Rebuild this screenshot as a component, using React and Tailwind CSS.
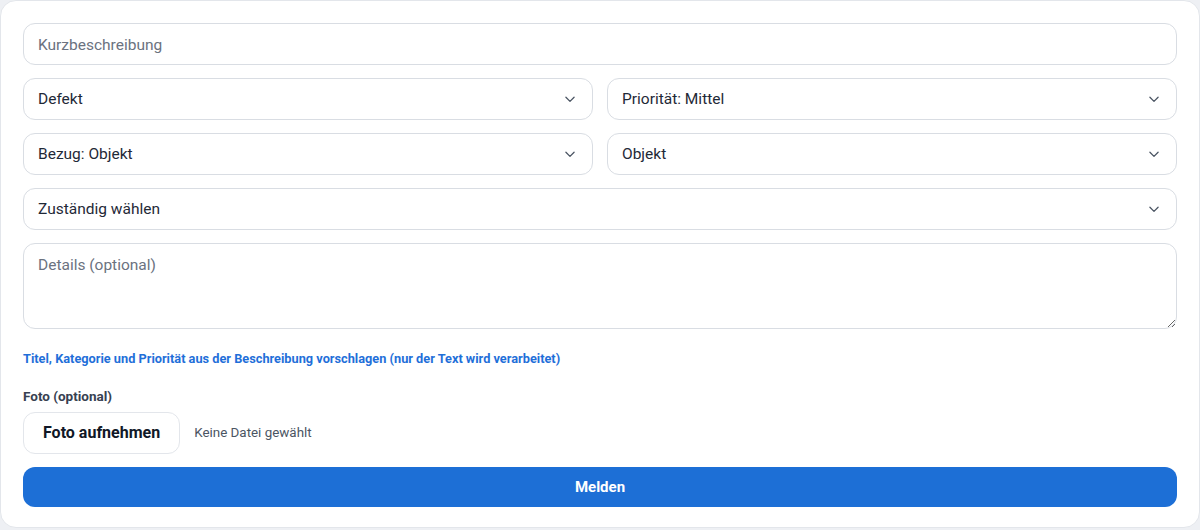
import React from "react";

function Chevron() {
  return (
    <svg
      width="14"
      height="14"
      viewBox="0 0 24 24"
      fill="none"
      stroke="#4b5563"
      strokeWidth="2.2"
      strokeLinecap="round"
      strokeLinejoin="round"
      className="shrink-0"
    >
      <path d="m5 9 7 7 7-7" />
    </svg>
  );
}

function Select({ label }) {
  return (
    <div className="h-[42px] rounded-xl border border-[#d9dde3] bg-white flex items-center justify-between pl-[14px] pr-[15px] text-[15.5px] text-[#1f2937]">
      <span className="pt-px">{label}</span>
      <Chevron />
    </div>
  );
}

export default function App() {
  return (
    <div
      className="w-full h-[530px] bg-[#eef0f4]"
      style={{ fontFamily: 'Roboto, "Noto Sans", sans-serif' }}
    >
      <div className="h-[528px] bg-white rounded-2xl border border-[#e3e6eb] px-[22px] pt-[22px] flex flex-col">
        <input
          placeholder="Kurzbeschreibung"
          className="h-[42px] rounded-xl border border-[#d9dde3] px-[14px] pt-px text-[15.5px] text-[#1f2937] placeholder:text-[#6b7280] outline-none"
        />

        <div className="grid grid-cols-2 gap-x-[14px] gap-y-[13px] mt-[13px]">
          <Select label="Defekt" />
          <Select label="Priorität: Mittel" />
          <Select label="Bezug: Objekt" />
          <Select label="Objekt" />
        </div>

        <div className="mt-[13px]">
          <Select label="Zuständig wählen" />
        </div>

        <textarea
          placeholder="Details (optional)"
          className="mt-[13px] h-[86px] rounded-xl border border-[#d9dde3] px-[14px] py-[10px] text-[15.5px] text-[#1f2937] placeholder:text-[#6b7280] outline-none resize-y"
        />

        <button className="mt-[20px] self-start text-[12.75px] font-bold text-[#1f6fd9]">
          Titel, Kategorie und Priorität aus der Beschreibung vorschlagen (nur der Text wird verarbeitet)
        </button>

        <div className="mt-[18px] text-[13.5px] font-bold text-[#374151]">
          Foto (optional)
        </div>

        <div className="mt-[6px] flex items-center gap-[14px]">
          <button className="h-[42px] px-[19px] rounded-xl border border-[#e3e6eb] bg-white text-[16px] font-bold text-[#111827]">
            Foto aufnehmen
          </button>
          <span className="text-[13.4px] text-[#4b5563]">Keine Datei gewählt</span>
        </div>

        <button className="mt-[13px] h-[40px] rounded-xl bg-[#1d6fd6] text-white text-[15px] font-bold">
          Melden
        </button>
      </div>
    </div>
  );
}
